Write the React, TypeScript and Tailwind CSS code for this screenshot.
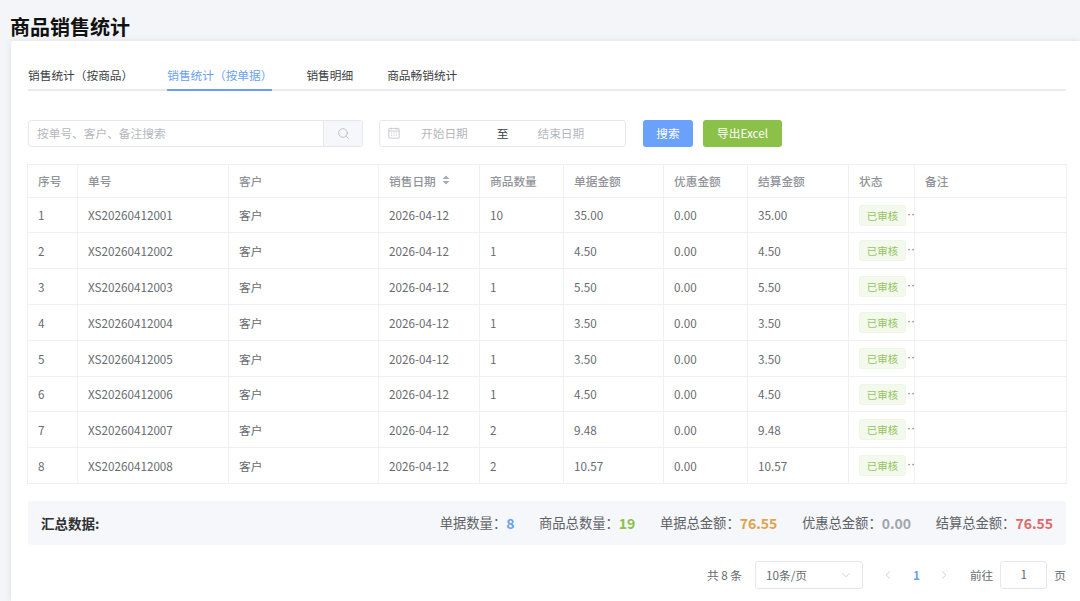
import { Search, ChevronDown, ChevronLeft, ChevronRight } from "lucide-react";

const rows = [
  ["1", "XS20260412001", "10", "35.00"],
  ["2", "XS20260412002", "1", "4.50"],
  ["3", "XS20260412003", "1", "5.50"],
  ["4", "XS20260412004", "1", "3.50"],
  ["5", "XS20260412005", "1", "3.50"],
  ["6", "XS20260412006", "1", "4.50"],
  ["7", "XS20260412007", "2", "9.48"],
  ["8", "XS20260412008", "2", "10.57"],
];

const tabs = ["销售统计（按商品）", "销售统计（按单据）", "销售明细", "商品畅销统计"];

function CalendarIcon() {
  return (
    <svg width="12" height="12" viewBox="0 0 12 12" fill="none" stroke="#c4c7cc" strokeWidth="0.9">
      <rect x="0.8" y="1.6" width="10.4" height="9.6" rx="0.6" />
      <path d="M0.8 4h10.4M3.3 0.6v2M8.7 0.6v2M3 6h1.2M5.4 6h1.2M7.8 6h1.2M3 8.2h1.2M5.4 8.2h1.2M7.8 8.2h1.2" />
    </svg>
  );
}

function Summary({ label, value, color }: { label: string; value: string; color: string }) {
  return (
    <span className="flex items-center text-[13.3px] text-[#606266]">
      {label}：<span className={`text-[14px] font-bold ${color}`}>{value}</span>
    </span>
  );
}

export default function App() {
  return (
    <div
      className="h-[601px] w-[1080px] overflow-hidden bg-[#f3f5f8] text-[11.7px] text-[#686b70]"
      style={{ fontFamily: '"Noto Sans CJK SC", "Noto Sans", sans-serif' }}
    >
      {/* Title */}
      <div className="h-[41px] pl-[10px] pt-[13px] text-[20px] leading-[28px] font-bold text-[#111]">商品销售统计</div>

      {/* Card */}
      <div className="ml-[11px] h-[560px] rounded-tl-[3px] bg-white pl-[17px] pr-[14px] pt-[22px] shadow-[0_0_6px_rgba(0,0,0,0.1)]">
        {/* Tabs */}
        <div className="flex h-[28px] gap-[34px] border-b-2 border-[#e8eaee]">
          {tabs.map((t, i) => (
            <div
              key={t}
              className={`-mb-[2px] h-[28px] whitespace-nowrap pt-[2px] leading-[20px] ${
                i === 1 ? "border-b-2 border-[#6a9ff5] text-[#6a9ff5]" : "text-[#3c3e42]"
              }`}
            >
              {t}
            </div>
          ))}
        </div>

        {/* Filters */}
        <div className="mt-[29px] flex items-center">
          <div className="flex h-[27px] w-[335px] overflow-hidden rounded-[3px] border border-[#e4e7ed]">
            <div className="flex-1 pl-[8px] leading-[23px] text-[#b4b7bd]">按单号、客户、备注搜索</div>
            <div className="flex w-[39px] items-center justify-center border-l border-[#e4e7ed] bg-[#f5f7fa]">
              <Search size={13} strokeWidth={1.1} className="text-[#a0a3a8]" />
            </div>
          </div>
          <div className="ml-[16px] flex h-[27px] w-[247px] items-center rounded-[3px] border border-[#e4e7ed] pb-[2px] pl-[8px]">
            <CalendarIcon />
            <span className="ml-[21px] text-[#b4b7bd]">开始日期</span>
            <span className="ml-[29px] text-[#3c3e42]">至</span>
            <span className="ml-[29px] text-[#b4b7bd]">结束日期</span>
          </div>
          <button className="ml-[17px] h-[27px] w-[50px] rounded-[3px] bg-[#6aa1fb] pb-[2px] text-white">搜索</button>
          <button className="ml-[10px] h-[27px] w-[79px] rounded-[3px] bg-[#8bc148] pb-[2px] text-white">导出Excel</button>
        </div>

        {/* Table */}
        <table className="mt-[17px] -ml-px w-[1039px] table-fixed border-collapse border border-[#eff0f3]">
          <colgroup>
            <col className="w-[50px]" />
            <col className="w-[151px]" />
            <col className="w-[150px]" />
            <col className="w-[101px]" />
            <col className="w-[84px]" />
            <col className="w-[100px]" />
            <col className="w-[84px]" />
            <col className="w-[101px]" />
            <col className="w-[66px]" />
            <col className="w-[152px]" />
          </colgroup>
          <thead>
            <tr className="h-[33px] text-left text-[#909399]">
              {["序号", "单号", "客户", "销售日期", "商品数量", "单据金额", "优惠金额", "结算金额", "状态", "备注"].map((h) => (
                <th key={h} className="border-r border-[#eff0f3] pb-[1px] pl-[10px] font-medium">
                  {h === "销售日期" ? (
                    <span className="flex items-center gap-[6px]">
                      {h}
                      <svg width="8" height="10" viewBox="0 0 8 10" fill="#a8abb2">
                        <path d="M4 0.5 7.5 4h-7zM4 9.5.5 6h7z" />
                      </svg>
                    </span>
                  ) : (
                    h
                  )}
                </th>
              ))}
            </tr>
          </thead>
          <tbody>
            {rows.map((r, i) => (
              <tr key={r[0]} className={`border-t border-[#eff0f3] ${i === 0 || i === 5 ? "h-[35px]" : "h-[36px]"}`}>
                <td className="border-r border-[#eff0f3] pl-[10px]">{r[0]}</td>
                <td className="border-r border-[#eff0f3] pl-[10px]">{r[1]}</td>
                <td className="border-r border-[#eff0f3] pl-[10px]">客户</td>
                <td className="border-r border-[#eff0f3] pl-[10px]">2026-04-12</td>
                <td className="border-r border-[#eff0f3] pl-[10px]">{r[2]}</td>
                <td className="border-r border-[#eff0f3] pl-[10px]">{r[3]}</td>
                <td className="border-r border-[#eff0f3] pl-[10px]">0.00</td>
                <td className="border-r border-[#eff0f3] pl-[10px]">{r[3]}</td>
                <td className="border-r border-[#eff0f3] pl-[10px]">
                  <div className="flex items-start">
                    <span className="h-[21px] w-[47px] shrink-0 rounded-[3px] border border-[#eef6e4] bg-[#f3f9ec] text-center text-[10.5px] leading-[19px] text-[#95c561]">
                      已审核
                    </span>
                    <span className="ml-[1px] mt-[3px] font-['Liberation_Sans'] text-[12px] leading-[12px] text-[#6b6e73]">··</span>
                  </div>
                </td>
                <td />
              </tr>
            ))}
          </tbody>
        </table>

        {/* Summary */}
        <div className="mt-[17px] flex h-[44px] w-[1038px] items-center rounded-[2px] bg-[#f5f7fa] pl-[13px] pr-[13px]">
          <span className="text-[13.5px] font-bold text-[#303133]">汇总数据:</span>
          <div className="ml-auto flex gap-[24.6px]">
            <Summary label="单据数量" value="8" color="text-[#6a9ff5]" />
            <Summary label="商品总数量" value="19" color="text-[#8bc148]" />
            <Summary label="单据总金额" value="76.55" color="text-[#e0a24e]" />
            <Summary label="优惠总金额" value="0.00" color="text-[#a2a5ab]" />
            <Summary label="结算总金额" value="76.55" color="text-[#e0686a]" />
          </div>
        </div>

        {/* Pagination */}
        <div className="mt-[16px] flex h-[28px] w-[1038px] items-center justify-end">
          <span>共 8 条</span>
          <div className="ml-[13px] flex h-[28px] w-[108px] items-center justify-between rounded-[3px] border border-[#e4e7ed] pl-[10px] pr-[9px]">
            <span>10条/页</span>
            <ChevronDown size={14} strokeWidth={1.1} className="text-[#b4b7bd]" />
          </div>
          <ChevronLeft size={14} strokeWidth={1.1} className="ml-[18px] text-[#b4b7bd]" />
          <span className="ml-[18px] font-bold text-[#6a9ff5]">1</span>
          <ChevronRight size={14} strokeWidth={1.1} className="ml-[17px] text-[#b4b7bd]" />
          <span className="ml-[19px]">前往</span>
          <div className="ml-[7px] h-[28px] w-[47px] rounded-[3px] border border-[#e4e7ed] text-center leading-[24px]">1</div>
          <span className="ml-[7px]">页</span>
        </div>
      </div>
    </div>
  );
}
